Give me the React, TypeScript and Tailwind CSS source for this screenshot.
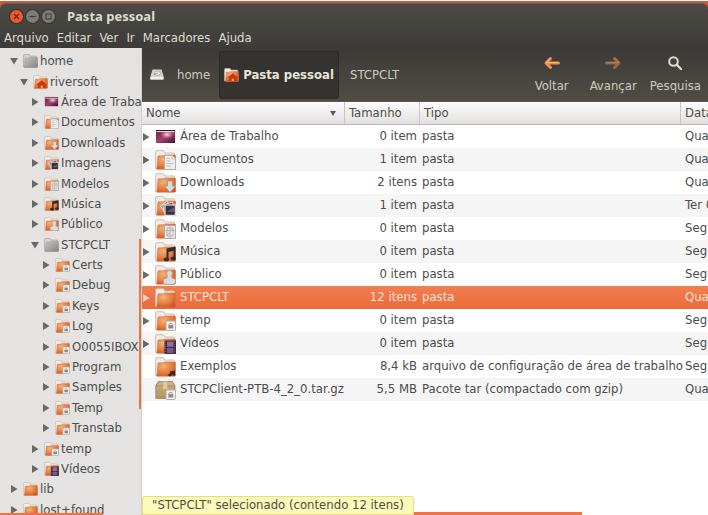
import React from "react";

type Emblem =
  | "none" | "doc" | "download" | "image" | "template" | "music"
  | "person" | "lock" | "film" | "link" | "house";

type Kind = Emblem | "desktop" | "grey" | "package";

function EmblemShape({ kind }: { kind: Emblem }) {
  switch (kind) {
    case "doc":
      return (
        <g>
          <path d="M9.500 5.500H17L20.500 9V19.500H9.500Z" fill="#f1efed" stroke="#b4b0ac" />
          <path d="M17 5.500V9H20.500" fill="#fff" stroke="#b4b0ac" strokeWidth=".8" />
          <path d="M11.500 8.500H15M11.500 11H15.500M11.500 13.500H18.500M11.500 16H16" stroke="#bfbcb9" strokeWidth="1" />
        </g>
      );
    case "download":
      return <path d="M12.500 8H17.500V13H20.800L15 19.500L9.200 13H12.500Z" fill="#dcdad8" stroke="#98928d" strokeWidth=".8" />;
    case "image":
      return (
        <g>
          <path d="M5.500 10L12 5L16 12L10 17Z" fill="#8b8582" stroke="#e6e4e2" strokeWidth="1" />
          <path d="M8 9L17.500 6L19 15L9 16Z" fill="#454045" stroke="#e6e4e2" strokeWidth="1" />
          <rect x="10" y="9" width="10.400" height="10.400" fill="#353040" stroke="#dedbd9" strokeWidth="1.300" />
          <path d="M11.500 16L19 11V16Z" fill="#655870" />
        </g>
      );
    case "template":
      return (
        <g>
          <path d="M9.500 6.500H20.500V19.500H9.500Z" fill="#ecebea" stroke="#b0acaa" />
          <path d="M12 9H18V17H12ZM12 17L18 9M10 11.500H20M15 7V19" fill="none" stroke="#b3b0af" strokeWidth=".9" />
        </g>
      );
    case "music":
      return (
        <g fill="#302e2d">
          <path d="M11.500 6.500L20.500 4.500V16.500H18.500V8.800L13.500 9.900V18H11.500Z" />
          <ellipse cx="11.300" cy="17.500" rx="2.600" ry="2" />
          <ellipse cx="18.300" cy="16.500" rx="2.600" ry="2" />
        </g>
      );
    case "person":
      return (
        <path d="M14.500 5.500C17 5.500 17.800 7.500 17 9.800C16.500 11 16.300 12 17 12.800L20.500 14.500V18.500C18 20 11 20 8.500 18.500V14.500L12 12.800C12.700 12 12.500 11 12 9.800C11.200 7.500 12 5.500 14.500 5.500Z" fill="#dedcda" stroke="#aaa29c" strokeWidth=".9" />
      );
    case "lock":
      return (
        <g>
          <rect x="11" y="10" width="9.500" height="9.500" rx="1" fill="#f4f3f2" stroke="#b5b0ac" />
          <rect x="13.300" y="14.200" width="5" height="3.300" fill="#8b8886" />
          <path d="M14.200 14.500V13.300C14.200 12 17.300 12 17.300 13.300V14.500" fill="none" stroke="#8b8886" strokeWidth=".9" />
        </g>
      );
    case "film":
      return (
        <g>
          <rect x="9.500" y="6.500" width="11.500" height="13.500" fill="#35282e" />
          <rect x="12" y="7.500" width="6.500" height="5.300" fill="#9568a8" />
          <rect x="12" y="13.800" width="6.500" height="5.300" fill="#7d558f" />
          <path d="M10.700 7.500V19.500M19.800 7.500V19.500" stroke="#8a7f84" strokeWidth="1" strokeDasharray="1 1.300" />
        </g>
      );
    case "link":
      return <path d="M20 13.500V18.500H18.500L17.500 17.500L15 19.500L12.500 18L15.500 16L14.800 14.500Z" fill="#2e2a28" />;
    case "house":
      return (
        <g>
          <path d="M5 13.500L12.300 7.500L19.500 13.500L18 14.500V18.500H6.800V14.500Z" fill="#c8380c" />
          <path d="M10.800 18.500V15H13.800V18.500Z" fill="#f3a070" />
        </g>
      );
    default:
      return null;
  }
}

function FileIcon({ kind, className }: { kind: Kind; className: string }) {
  if (kind === "desktop") {
    return (
      <svg viewBox="0 0 21 20" className={className} aria-hidden="true">
        <rect x="1" y="3.500" width="19" height="12.500" fill="url(#desk)" />
        <ellipse cx="12" cy="7.500" rx="7" ry="4.500" fill="url(#glow)" />
        <path d="M1 3.500H20" stroke="#35142a" strokeWidth="1" />
        <path d="M1.500 4.600H19.500" stroke="#f0e4ea" strokeWidth="1" />
      </svg>
    );
  }
  if (kind === "package") {
    return (
      <svg viewBox="0 0 21 20" className={className} aria-hidden="true">
        <path d="M3 1.500H17.500L20 6V18.500H.8V6Z" fill="url(#box)" stroke="#9c8055" strokeWidth=".8" />
        <path d="M.8 6H20" stroke="#a3875b" strokeWidth=".8" />
        <path d="M8.500 1.500H12L12.500 9H8Z" fill="#dcc9a6" />
        <EmblemShape kind="lock" />
      </svg>
    );
  }
  const grey = kind === "grey";
  return (
    <svg viewBox="0 0 21 20" className={className} aria-hidden="true">
      <path
        d="M.6 18.500V2Q.6 .700 2 .700H8Q9 .700 9.300 1.700L9.700 3H18.500Q19.500 3 19.500 4V6L20.300 18.500Z"
        fill={grey ? "#d5d4d2" : "#f3ebe6"}
        stroke={grey ? "#9d9b98" : "#c6bab3"}
        strokeWidth=".9"
      />
      <path
        d="M2.800 6.800Q2.800 5.800 4 5.800H8L10 4.900H19.500Q20.600 4.900 20.600 6V18.300Q20.600 19.300 19.500 19.300H1.800Z"
        fill={grey ? "url(#greyFace)" : "url(#orangeFace)"}
        stroke={grey ? "#7d7b78" : "#d0703c"}
        strokeWidth=".5"
      />
      {!grey && <EmblemShape kind={kind as Emblem} />}
    </svg>
  );
}

function Gradients() {
  return (
    <svg className="absolute size-0" aria-hidden="true">
      <defs>
        <radialGradient id="orangeFace" cx=".35" cy=".3" r=".85">
          <stop offset="0" stopColor="#f2b27a" />
          <stop offset=".5" stopColor="#e58142" />
          <stop offset="1" stopColor="#d54a16" />
        </radialGradient>
        <linearGradient id="greyFace" x1="0" y1="0" x2="1" y2="1">
          <stop offset="0" stopColor="#c6c5c3" />
          <stop offset="1" stopColor="#858381" />
        </linearGradient>
        <linearGradient id="desk" x1="0" y1="0" x2="1" y2="1">
          <stop offset="0" stopColor="#64203c" />
          <stop offset=".5" stopColor="#a2416c" />
          <stop offset="1" stopColor="#3c1430" />
        </linearGradient>
        <radialGradient id="glow">
          <stop offset="0" stopColor="#f9dfe6" />
          <stop offset="1" stopColor="#d987a5" stopOpacity="0" />
        </radialGradient>
        <linearGradient id="box" x1="0" y1="0" x2="0" y2="1">
          <stop offset="0" stopColor="#cdb48a" />
          <stop offset="1" stopColor="#b3935f" />
        </linearGradient>
      </defs>
    </svg>
  );
}

function Expander({ open = false, light = false }: { open?: boolean; light?: boolean }) {
  return (
    <svg viewBox="0 0 8 8" className="size-2 shrink-0" aria-hidden="true">
      <path d={open ? "M0 1H8L4 7.500Z" : "M1 0V8L7.500 4Z"} fill={light ? "#fbd0bd" : "#6a6967"} />
    </svg>
  );
}

const indents = ["pl-[10px]", "pl-[20px]", "pl-[31px]", "pl-[42px]"];

const tree: { name: string; level: number; kind: Kind; open?: boolean }[] = [
  { name: "home", level: 0, kind: "grey", open: true },
  { name: "riversoft", level: 1, kind: "house", open: true },
  { name: "Área de Traba", level: 2, kind: "desktop" },
  { name: "Documentos", level: 2, kind: "doc" },
  { name: "Downloads", level: 2, kind: "download" },
  { name: "Imagens", level: 2, kind: "image" },
  { name: "Modelos", level: 2, kind: "template" },
  { name: "Música", level: 2, kind: "music" },
  { name: "Público", level: 2, kind: "person" },
  { name: "STCPCLT", level: 2, kind: "grey", open: true },
  { name: "Certs", level: 3, kind: "lock" },
  { name: "Debug", level: 3, kind: "lock" },
  { name: "Keys", level: 3, kind: "lock" },
  { name: "Log", level: 3, kind: "lock" },
  { name: "O0055IBOX", level: 3, kind: "lock" },
  { name: "Program", level: 3, kind: "lock" },
  { name: "Samples", level: 3, kind: "lock" },
  { name: "Temp", level: 3, kind: "lock" },
  { name: "Transtab", level: 3, kind: "lock" },
  { name: "temp", level: 2, kind: "lock" },
  { name: "Vídeos", level: 2, kind: "film" },
  { name: "lib", level: 0, kind: "none" },
  { name: "lost+found", level: 0, kind: "none" },
];

const files: { name: string; size: string; type: string; date: string; kind: Kind; leaf?: boolean }[] = [
  { name: "Área de Trabalho", size: "0 item", type: "pasta", date: "Qua", kind: "desktop" },
  { name: "Documentos", size: "1 item", type: "pasta", date: "Qua", kind: "doc" },
  { name: "Downloads", size: "2 itens", type: "pasta", date: "Qua", kind: "download" },
  { name: "Imagens", size: "1 item", type: "pasta", date: "Ter 0", kind: "image" },
  { name: "Modelos", size: "0 item", type: "pasta", date: "Seg", kind: "template" },
  { name: "Música", size: "0 item", type: "pasta", date: "Seg", kind: "music" },
  { name: "Público", size: "0 item", type: "pasta", date: "Seg", kind: "person" },
  { name: "STCPCLT", size: "12 itens", type: "pasta", date: "Qua", kind: "none" },
  { name: "temp", size: "0 item", type: "pasta", date: "Seg", kind: "lock" },
  { name: "Vídeos", size: "0 item", type: "pasta", date: "Seg", kind: "film" },
  { name: "Exemplos", size: "8,4 kB", type: "arquivo de configuração de área de trabalho", date: "Seg", kind: "link", leaf: true },
  { name: "STCPClient-PTB-4_2_0.tar.gz", size: "5,5 MB", type: "Pacote tar (compactado com gzip)", date: "Qua", kind: "package", leaf: true },
];

function TitleBar() {
  return (
    <header className="border-t border-white bg-[#d4553c]">
      <div className="mt-[2px] rounded-t-md border-t border-[#5d5b54] bg-linear-to-b from-[#4c4b45] to-[#3c3b37]">
        <div className="flex h-6 items-center gap-[3px] pl-[10px]">
          <button aria-label="Fechar" className="grid size-[13px] place-items-center rounded-full bg-[#ee5b2c] ring-1 ring-[#35342f]">
            <svg viewBox="0 0 13 13" className="size-[13px]" aria-hidden="true">
              <path d="M4 4L9 9M9 4L4 9" stroke="#6b2410" strokeWidth="1.200" />
            </svg>
          </button>
          <button aria-label="Minimizar" className="grid size-[13px] place-items-center rounded-full bg-[#7c7b76] ring-1 ring-[#35342f]">
            <svg viewBox="0 0 13 13" className="size-[13px]" aria-hidden="true">
              <path d="M3.500 6.500H9.500" stroke="#3b3a36" strokeWidth="1.200" />
            </svg>
          </button>
          <button aria-label="Maximizar" className="grid size-[13px] place-items-center rounded-full bg-[#7c7b76] ring-1 ring-[#35342f]">
            <svg viewBox="0 0 13 13" className="size-[13px]" aria-hidden="true">
              <rect x="4" y="4" width="5" height="5" fill="none" stroke="#3b3a36" strokeWidth="1" />
            </svg>
          </button>
          <h1 className="pl-[9px] font-['Noto_Sans',sans-serif] text-[13px] font-bold text-[#dfdbd2]">Pasta pessoal</h1>
        </div>
        <nav aria-label="Menu" className="flex h-5 items-center gap-2 pl-1 text-[#dfdbd2]">
          {["Arquivo", "Editar", "Ver", "Ir", "Marcadores", "Ajuda"].map((m) => (
            <button key={m}>{m}</button>
          ))}
        </nav>
      </div>
    </header>
  );
}

function Sidebar() {
  return (
    <aside className="relative w-[142px] shrink-0 overflow-hidden border-r border-[#d2d0ce] bg-[#e4e3e1]">
      <ul className="mt-[3px] grid h-[469px] auto-rows-fr">
        {tree.map((n) => (
          <li key={n.name + n.level} className={`flex min-w-0 ${indents[n.level]}`}>
            <button className="flex items-center whitespace-nowrap">
              <Expander open={n.open} />
              <FileIcon kind={n.kind} className="mr-[2px] ml-[5px] h-[14px] w-[15px] shrink-0" />
              <span>{n.name}</span>
            </button>
          </li>
        ))}
      </ul>
      <div className="absolute top-[191px] right-0 h-[170px] w-[2px] bg-[#ee7446]" />
      <div className="absolute bottom-0 left-0 h-[2px] w-[103px] bg-[#ee7446]" />
    </aside>
  );
}

function Toolbar() {
  const action = "flex flex-col items-center gap-2";
  return (
    <div className="flex h-[54px] items-center border-b border-[#5c5952] bg-linear-to-b from-[#3b3a36] to-[#504d46] text-[#cfcabf]">
      <nav aria-label="Caminho" className="flex h-full min-w-0 flex-1 items-center">
        <button className="flex items-center gap-[13px] pr-[9px] pl-2">
          <svg viewBox="0 0 14 11" className="h-[11px] w-[14px]" aria-hidden="true">
            <path d="M2.500 .5H11.500L13.500 7V10.500H.5V7Z" fill="#d3d1cd" />
            <path d="M.5 8H13.500V10.500H.5Z" fill="#f0efed" />
            <ellipse cx="7.500" cy="4.200" rx="3" ry="2.200" fill="#e6e4e2" stroke="#a5a29e" strokeWidth=".7" />
            <path d="M7.500 4.200L4 5.500" stroke="#86837e" strokeWidth=".8" />
          </svg>
          home
        </button>
        <button className="flex h-12 items-center gap-1 rounded-[3px] border border-[#2c2b28] bg-[#34332f] px-1 font-bold whitespace-nowrap text-[#e9e4d9]">
          <FileIcon kind="house" className="h-[14px] w-[15px]" />
          Pasta pessoal
        </button>
        <button className="px-[11px]">STCPCLT</button>
      </nav>
      <div className="flex gap-[13px] pt-px pr-[7px]">
        <button className={action}>
          <svg viewBox="0 0 18 14" className="h-[14px] w-[18px]" aria-hidden="true">
            <path d="M7.500 2.500L3 7L7.500 11.500M3.500 7H15.500" fill="none" stroke="#f28a4c" strokeWidth="3" strokeLinecap="round" strokeLinejoin="round" />
            <path d="M7 2.700L3 6.500H15" fill="none" stroke="#fbb67c" strokeWidth="1" strokeLinecap="round" />
          </svg>
          <span className="px-2">Voltar</span>
        </button>
        <button className={action}>
          <svg viewBox="0 0 18 14" className="h-[14px] w-[18px]" aria-hidden="true">
            <path d="M10.500 2.500L15 7L10.500 11.500M14.500 7H2.500" fill="none" stroke="#9a6745" strokeWidth="3" strokeLinecap="round" strokeLinejoin="round" />
            <path d="M11 2.700L15 6.500H3" fill="none" stroke="#ab8260" strokeWidth="1" strokeLinecap="round" />
          </svg>
          <span>Avançar</span>
        </button>
        <button className={action}>
          <svg viewBox="0 0 16 14" className="h-[14px] w-[16px]" aria-hidden="true">
            <circle cx="6.500" cy="5.500" r="4.300" fill="none" stroke="#e0dcd3" strokeWidth="2" />
            <path d="M10 9L14 13" stroke="#e0dcd3" strokeWidth="2.400" strokeLinecap="round" />
          </svg>
          <span>Pesquisa</span>
        </button>
      </div>
    </div>
  );
}

function FileTable() {
  const th = "border-r border-[#c9c7c4] p-0 pl-1 text-left font-normal";
  return (
    <table className="w-full table-fixed border-separate border-spacing-0 whitespace-nowrap">
      <colgroup>
        <col className="w-[203px]" />
        <col className="w-[75px]" />
        <col className="w-[261px]" />
        <col />
      </colgroup>
      <thead className="bg-linear-to-b from-[#fdfdfd] to-[#e0dfdd]">
        <tr className="h-[23px] *:border-b *:border-b-[#b9b6b3]">
          <th className={th}>
            <button className="flex w-full items-center justify-between pr-2">
              Nome
              <svg viewBox="0 0 6 5" className="h-[5px] w-[6px]" aria-hidden="true">
                <path d="M0 0H6L3 5Z" fill="#5c5a58" />
              </svg>
            </button>
          </th>
          <th className={th}><button>Tamanho</button></th>
          <th className={th}><button>Tipo</button></th>
          <th className="p-0 pl-1 text-left font-normal"><button>Data</button></th>
        </tr>
      </thead>
      <tbody>
        {files.map((f) => {
          const selected = f.name === "STCPCLT";
          return (
            <tr
              key={f.name}
              aria-selected={selected}
              className={
                selected
                  ? "h-[23px] bg-linear-to-b from-[#f37e50] to-[#e86c3a] text-[#fbe0d4]"
                  : "h-[23px] odd:bg-white even:bg-[#f5f5f5]"
              }
            >
              <td className="p-0">
                <div className="flex h-[23px] items-center">
                  {f.leaf ? <span className="w-2" /> : <Expander light={selected} />}
                  <FileIcon kind={f.kind} className="mr-1 ml-[5px] h-5 w-[21px] shrink-0" />
                  <span className="pb-[2px]">{f.name}</span>
                </div>
              </td>
              <td className="p-0 pr-[3px] pb-[2px] text-right">{f.size}</td>
              <td className="p-0 pb-[2px] pl-[2px]">{f.type}</td>
              <td className="p-0 pb-[2px] pl-1">{f.date}</td>
            </tr>
          );
        })}
      </tbody>
    </table>
  );
}

export default function App() {
  return (
    <div className="flex h-screen flex-col overflow-hidden bg-white font-['DejaVu_Sans_Condensed','DejaVu_Sans',sans-serif] text-[13px] leading-4 text-[#4c4c4c]">
      <Gradients />
      <TitleBar />
      <div className="flex min-h-0 flex-1">
        <Sidebar />
        <main className="relative min-w-0 flex-1 overflow-hidden bg-white">
          <Toolbar />
          <FileTable />
          <div role="status" className="absolute bottom-0 left-0 z-10 rounded-t-[3px] border border-[#e3e07e] bg-[#fbfab8] px-[9px] pb-px whitespace-nowrap">
            "STCPCLT" selecionado (contendo 12 itens)
          </div>
          <div className="absolute bottom-0 left-0 h-[3px] w-[440px] bg-[#ee7446]" />
        </main>
      </div>
    </div>
  );
}
